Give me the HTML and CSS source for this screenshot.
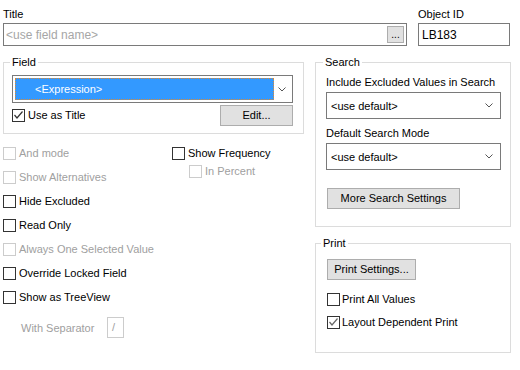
FILE: index.html
```html
<!DOCTYPE html>
<html>
<head>
<meta charset="utf-8">
<link rel="stylesheet" href="styles.css">
</head>
<body>
<div class="dlg">
  <div class="top">
    <div class="title-col">
      <div class="lbl">Title</div>
      <div class="input title-input">
        <span class="ph">&lt;use field name&gt;</span>
        <span class="dots">...</span>
      </div>
    </div>
    <div class="oid-col">
      <div class="lbl">Object ID</div>
      <div class="input oid">LB183</div>
    </div>
  </div>

  <div class="main">
    <div class="left">
      <fieldset class="grp field-grp">
        <legend>Field</legend>
        <div class="combo field-combo">
          <span class="sel">&lt;Expression&gt;</span>
          <span class="arrow"><svg width="8" height="5" viewBox="0 0 8 5"><polyline points="0.5,0.5 4,4 7.5,0.5" fill="none" stroke="#555" stroke-width="1"/></svg></span>
        </div>
        <div class="use-row">
          <label class="cb"><span class="box"><svg width="11" height="11" viewBox="0 0 11 11"><polyline points="1.5,5 4,8 9.5,1.5" fill="none" stroke="#333" stroke-width="1.2"/></svg></span>Use as Title</label>
          <span class="btn edit">Edit...</span>
        </div>
      </fieldset>

      <div class="opts">
        <div class="col1">
          <label class="cb dis"><span class="box"></span>And mode</label>
          <label class="cb dis"><span class="box"></span>Show Alternatives</label>
          <label class="cb"><span class="box"></span>Hide Excluded</label>
          <label class="cb"><span class="box"></span>Read Only</label>
          <label class="cb dis"><span class="box"></span>Always One Selected Value</label>
          <label class="cb"><span class="box"></span>Override Locked Field</label>
          <label class="cb"><span class="box"></span>Show as TreeView</label>
          <div class="sep-row dis">
            <span class="sep-lbl">With Separator</span>
            <span class="sep-input">/</span>
          </div>
        </div>
        <div class="col2">
          <label class="cb"><span class="box"></span>Show Frequency</label>
          <label class="cb dis sub"><span class="box"></span>In Percent</label>
        </div>
      </div>
    </div>

    <div class="right">
      <fieldset class="grp search">
        <legend>Search</legend>
        <div class="slbl">Include Excluded Values in Search</div>
        <div class="combo scombo">
          <span class="val">&lt;use default&gt;</span>
          <span class="arrow"><svg width="8" height="5" viewBox="0 0 8 5"><polyline points="0.5,0.5 4,4 7.5,0.5" fill="none" stroke="#555" stroke-width="1"/></svg></span>
        </div>
        <div class="slbl second">Default Search Mode</div>
        <div class="combo scombo">
          <span class="val">&lt;use default&gt;</span>
          <span class="arrow"><svg width="8" height="5" viewBox="0 0 8 5"><polyline points="0.5,0.5 4,4 7.5,0.5" fill="none" stroke="#555" stroke-width="1"/></svg></span>
        </div>
        <span class="btn more">More Search Settings</span>
      </fieldset>

      <fieldset class="grp print">
        <legend>Print</legend>
        <span class="btn psettings">Print Settings...</span>
        <label class="cb pcb first"><span class="box"></span>Print All Values</label>
        <label class="cb pcb"><span class="box"><svg width="11" height="11" viewBox="0 0 11 11"><polyline points="1.5,5 4,8 9.5,1.5" fill="none" stroke="#666" stroke-width="1.2"/></svg></span>Layout Dependent Print</label>
      </fieldset>
    </div>
  </div>
</div>
</body>
</html>
```

FILE: styles.css
```css
* { box-sizing: border-box; }

body {
  margin: 0;
  background: #ffffff;
  font-family: "Liberation Sans", Arial, sans-serif;
  font-size: 11px;
  color: #000;
}

.dlg {
  width: 520px;
  height: 370px;
  padding: 8px 0 0 3px;
}

.top {
  display: flex;
}

.title-col { width: 404px; }

.oid-col {
  width: 92px;
  margin-left: 11px;
}

.lbl {
  height: 13px;
  line-height: 13px;
  margin-bottom: 2px;
}

.input {
  height: 23px;
  border: 1px solid #7a7a7a;
  display: flex;
  align-items: center;
  background: #fff;
  font-size: 12px;
}

.title-input { padding-left: 2px; }

.ph { color: #a6a6a6; }

.dots {
  margin-left: auto;
  margin-right: 2px;
  width: 17px;
  height: 17px;
  background: #e1e1e1;
  border: 1px solid #adadad;
  line-height: 15px;
  text-align: center;
  font-size: 10px;
}

.oid { padding-left: 3px; }

.main {
  display: flex;
  margin-top: 10px;
}

.left { width: 301px; }

.right {
  width: 196px;
  margin-left: 11px;
}

.grp {
  margin: 0;
  min-width: 0;
  border: 1px solid #dcdcdc;
}

.grp legend {
  padding: 0 2px;
  height: 13px;
  line-height: 13px;
}

.field-grp {
  padding: 6px 10px 7px 8px;
}

.field-grp legend { margin-left: -2px; }

.combo {
  border: 1px solid #7a7a7a;
  display: flex;
  align-items: center;
  background: #fff;
}

.field-combo {
  height: 28px;
  padding: 2px;
}

.sel {
  width: 259px;
  height: 22px;
  background: #3399ff;
  border: 1px dotted #e0892e;
  color: #fff;
  line-height: 20px;
  padding-left: 19px;
}

.arrow {
  flex: 1;
  display: flex;
  justify-content: center;
  align-items: center;
}

.arrow svg { display: block; }

.use-row {
  display: flex;
  align-items: center;
  margin-top: 2px;
  height: 21px;
}

.cb {
  display: flex;
  align-items: center;
  gap: 3px;
  height: 13px;
  line-height: 13px;
  white-space: nowrap;
}

.box {
  width: 13px;
  height: 13px;
  border: 1px solid #333;
  background: #fff;
  display: flex;
  align-items: center;
  justify-content: center;
  flex: none;
}

.box svg { display: block; }

.dis { color: #a0a0a0; }
.dis .box { border-color: #cccccc; }

.btn {
  display: block;
  height: 21px;
  background: #e1e1e1;
  border: 1px solid #adadad;
  text-align: center;
  line-height: 19px;
}

.edit {
  width: 73px;
  margin-left: auto;
}

.opts {
  display: flex;
  margin-top: 13px;
}

.col1 {
  width: 169px;
  display: flex;
  flex-direction: column;
  gap: 11px;
}

.col2 {
  display: flex;
  flex-direction: column;
  gap: 5px;
}

.col2 .sub { margin-left: 17px; }

.sep-row {
  display: flex;
  align-items: center;
  margin-top: 2px;
  padding-left: 18px;
}

.sep-lbl { width: 86px; }

.sep-input {
  width: 17px;
  height: 21px;
  border: 1px solid #cccccc;
  line-height: 19px;
  padding-left: 4px;
}

.search {
  padding: 7px 9px 17px 10px;
}

.search legend { margin-left: -3px; }

.slbl {
  height: 13px;
  line-height: 13px;
  margin-bottom: 3px;
}

.slbl.second { margin-top: 8px; }

.scombo {
  height: 27px;
  padding-left: 4px;
}

.scombo .val { flex: 1; }

.scombo .arrow {
  flex: none;
  width: 22px;
}

.more {
  width: 133px;
  margin: 18px 0 0 1px;
}

.print {
  margin-top: 10px;
  padding: 9px 9px 23px 10px;
}

.print legend { margin-left: -5px; }

.psettings {
  width: 89px;
  margin-left: 1px;
}

.pcb {
  margin-left: 1px;
  gap: 2px;
  margin-top: 10px;
}

.pcb.first { margin-top: 13px; }
```
